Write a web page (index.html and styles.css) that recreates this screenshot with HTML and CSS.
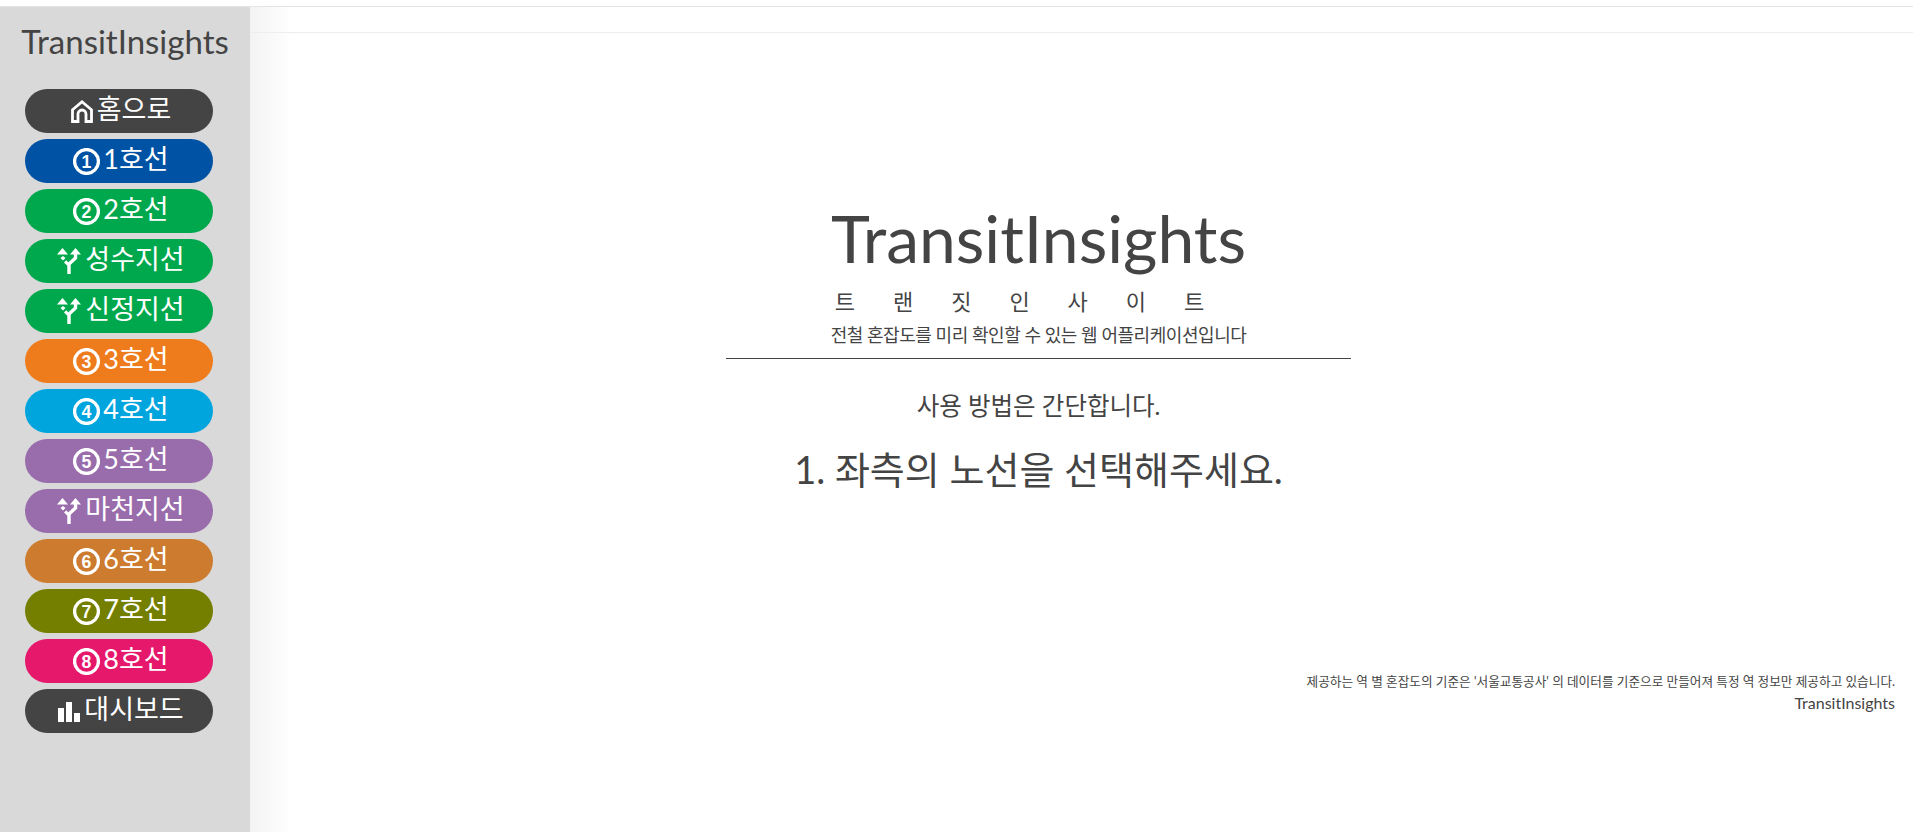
FILE: index.html
```html
<!DOCTYPE html>
<html lang="ko">
<head>
<meta charset="utf-8">
<title>TransitInsights</title>
<link rel="stylesheet" href="styles.css">
</head>
<body>
<svg class="defs" width="0" height="0" aria-hidden="true">
  <defs>
    <symbol id="i-home" viewBox="0 0 22 23"><path d="M1.500 21.500V9.800L11 1.800 20.500 9.800V21.500H15V14a4 4 0 0 0-8 0V21.500Z" fill="none" stroke="currentColor" stroke-width="2.800"/></symbol>
    <symbol id="i-branch" viewBox="0 0 24 26"><path d="M12 26V16L18.500 10V5" fill="none" stroke="currentColor" stroke-width="3.400"/><path d="M18.500 0l5.500 6.500H13ZM5.500 0L11 6.500H0ZM12.500 15.500l-2.200 2.200L7 14.500l2.200-2.200ZM6 8l2.500 2-2.500 2.500L3.500 10Z" fill="currentColor"/></symbol>
    <symbol id="i-bars" viewBox="0 0 22 20"><path d="M0 6h6v14H0ZM8 0h6v20H8ZM16 11h6v9h-6Z" fill="currentColor"/></symbol>
  </defs>
</svg>
<div class="topline"></div>
<div class="app">
  <aside class="sidebar">
    <h2 class="brand">TransitInsights</h2>
    <nav class="lines">
      <a class="line c-dark"><svg class="ico ico-home"><use href="#i-home"/></svg><span>홈으로</span></a>
      <a class="line c-1"><svg class="num" viewBox="0 0 26 26"><circle cx="13" cy="13" r="11.500"/><text x="13" y="19">1</text></svg><span>1호선</span></a>
      <a class="line c-2"><svg class="num" viewBox="0 0 26 26"><circle cx="13" cy="13" r="11.500"/><text x="13" y="19">2</text></svg><span>2호선</span></a>
      <a class="line c-2"><svg class="ico ico-branch"><use href="#i-branch"/></svg><span>성수지선</span></a>
      <a class="line c-2"><svg class="ico ico-branch"><use href="#i-branch"/></svg><span>신정지선</span></a>
      <a class="line c-3"><svg class="num" viewBox="0 0 26 26"><circle cx="13" cy="13" r="11.500"/><text x="13" y="19">3</text></svg><span>3호선</span></a>
      <a class="line c-4"><svg class="num" viewBox="0 0 26 26"><circle cx="13" cy="13" r="11.500"/><text x="13" y="19">4</text></svg><span>4호선</span></a>
      <a class="line c-5"><svg class="num" viewBox="0 0 26 26"><circle cx="13" cy="13" r="11.500"/><text x="13" y="19">5</text></svg><span>5호선</span></a>
      <a class="line c-5"><svg class="ico ico-branch"><use href="#i-branch"/></svg><span>마천지선</span></a>
      <a class="line c-6"><svg class="num" viewBox="0 0 26 26"><circle cx="13" cy="13" r="11.500"/><text x="13" y="19">6</text></svg><span>6호선</span></a>
      <a class="line c-7"><svg class="num" viewBox="0 0 26 26"><circle cx="13" cy="13" r="11.500"/><text x="13" y="19">7</text></svg><span>7호선</span></a>
      <a class="line c-8"><svg class="num" viewBox="0 0 26 26"><circle cx="13" cy="13" r="11.500"/><text x="13" y="19">8</text></svg><span>8호선</span></a>
      <a class="line c-dark"><svg class="ico ico-bars"><use href="#i-bars"/></svg><span>대시보드</span></a>
    </nav>
  </aside>
  <main class="content">
    <div class="navbar"></div>
    <section class="hero">
      <h1 class="title">TransitInsights</h1>
      <p class="spaced">트랜짓인사이트</p>
      <p class="desc">전철 혼잡도를 미리 확인할 수 있는 웹 어플리케이션입니다</p>
      <hr class="rule">
      <p class="howto">사용 방법은 간단합니다.</p>
      <p class="step">1. 좌측의 노선을 선택해주세요.</p>
    </section>
    <footer class="note">
      <p class="note-text">제공하는 역 별 혼잡도의 기준은 '서울교통공사' 의 데이터를 기준으로 만들어져 특정 역 정보만 제공하고 있습니다.</p>
      <p class="note-brand">TransitInsights</p>
    </footer>
  </main>
</div>
</body>
</html>
```
FILE: styles.css
```css
* { box-sizing: border-box; }
html, body { margin: 0; height: 100%; }
body {
  background: #fff;
  color: #444;
  font-family: Lato, "Noto Sans CJK KR", sans-serif;
  overflow: hidden;
}
.defs { display: block; height: 0; }
.topline { height: 7px; border-bottom: 1px solid #e4e4e4; }
.app { display: flex; height: 825px; }
.sidebar {
  flex: 0 0 250px;
  background: #d9d9d9;
  padding: 0 25px;
}
.brand {
  margin: 14px -25px 0;
  font-size: 33px;
  line-height: 40px;
  font-weight: 400;
  text-align: center;
}
.lines { display: flex; flex-direction: column; gap: 6px; margin-top: 28px; width: 188px; }
.line {
  display: flex;
  align-items: center;
  justify-content: center;
  gap: 4px;
  height: 44px;
  padding-left: 4px;
  border-radius: 22px;
  color: #fff;
  font-size: 27px;
  font-weight: 400;
  line-height: 40px;
}
.line span { position: relative; top: -2px; }
.ico { flex: none; }
.ico-home { width: 22px; height: 23px; }
.ico-branch { width: 24px; height: 26px; }
.ico-bars { width: 22px; height: 20px; margin-top: 2px; }
.num { width: 27px; height: 27px; flex: none; }
.num + span { margin-left: -1px; }
.num circle { fill: none; stroke: currentColor; stroke-width: 3.200; }
.num text {
  fill: currentColor;
  font: 700 17px "Liberation Sans", sans-serif;
  text-anchor: middle;
}
.c-dark { background: #444; }
.c-1 { background: #0052a4; }
.c-2 { background: #00a84d; }
.c-3 { background: #ef7c1c; }
.c-4 { background: #00a5de; }
.c-5 { background: #996cac; }
.c-6 { background: #cd7c2f; }
.c-7 { background: #747f00; }
.c-8 { background: #e6186c; }
.content {
  flex: 1;
  min-width: 0;
  display: flex;
  flex-direction: column;
  background: linear-gradient(to right, #f3f3f3 0, #fff 42px);
}
.navbar { height: 26px; flex: none; border-bottom: 1px solid #eee; }
.hero {
  width: 625px;
  margin: 165px 0 0 476px;
  text-align: center;
}
.title { margin: 0; font-size: 66px; line-height: 80px; font-weight: 400; }
.spaced { margin: 9px 0 0; font-size: 22px; line-height: 30px; letter-spacing: 38px; }
.desc { margin: 4px 0 0; font-size: 18px; line-height: 28px; letter-spacing: -0.45px; }
.rule { margin: 9px 0 0; border: 0; border-top: 1px solid #444; }
.howto { margin: 30px 0 0; font-size: 24.500px; line-height: 34px; }
.step { margin: 21px 0 0; font-size: 38px; line-height: 50px; }
.note { padding: 0 18px 0 0; margin-top: 178px; text-align: right; }
.note-text { margin: 0; font-size: 12.650px; line-height: 20px; }
.note-brand { margin: 1px 0 0; font-size: 16px; line-height: 20px; }
```
